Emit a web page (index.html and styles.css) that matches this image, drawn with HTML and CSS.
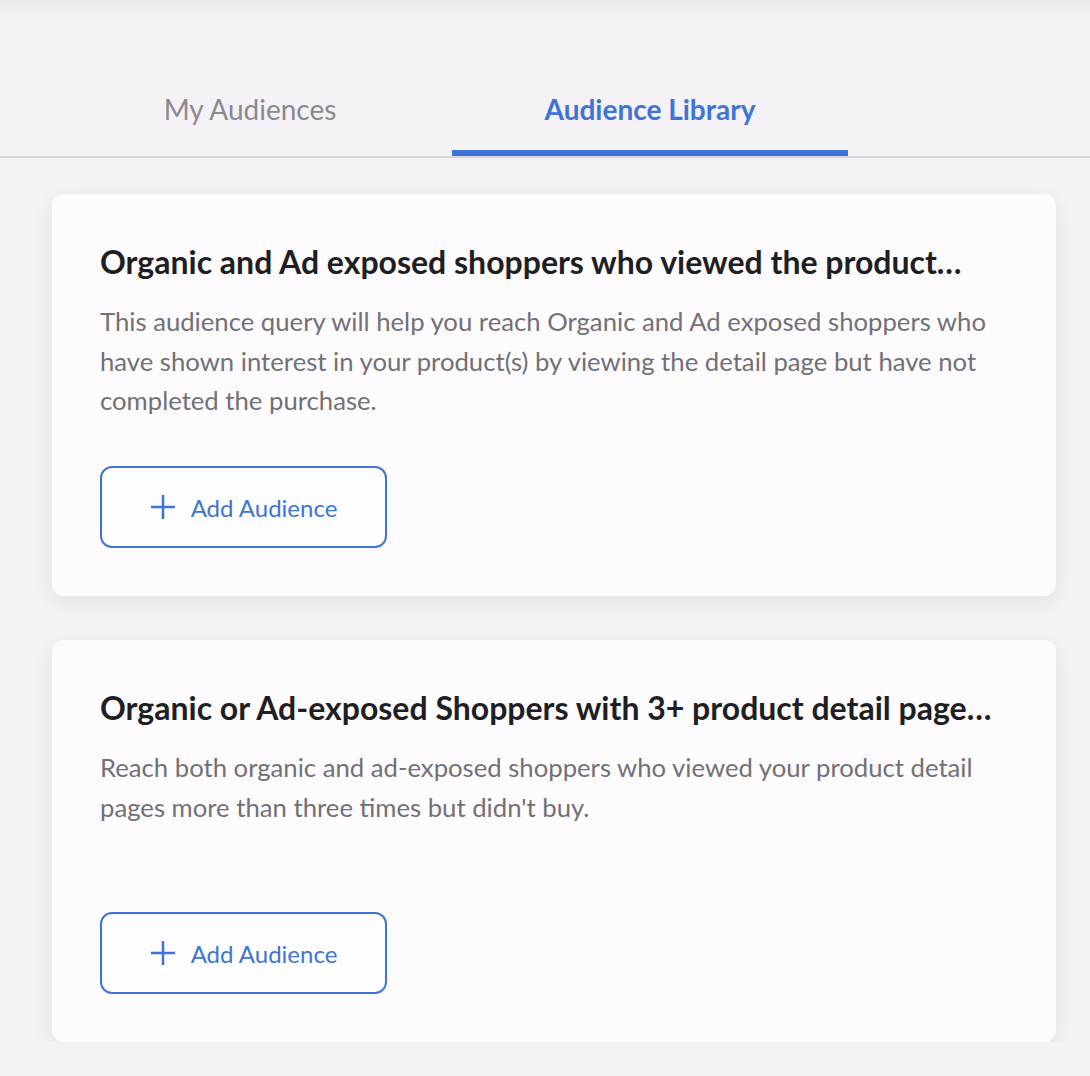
FILE: index.html
```html
<!DOCTYPE html>
<html lang="en">
<head>
    <meta charset="UTF-8">
    <title>Audiences</title>
    <link rel="stylesheet" href="styles.css">
</head>
<body>
    <!-- Tabs -->
    <nav class="tabs">
        <div class="tab">My Audiences</div>
        <div class="tab active">Audience Library</div>
    </nav>

    <!-- Audience library list -->
    <main class="library">
        <section class="card">
            <h2 class="card-title">Organic and Ad exposed shoppers who viewed the product…</h2>
            <p class="card-desc">This audience query will help you reach Organic and Ad exposed shoppers who have shown interest in your product(s) by viewing the detail page but have not completed the purchase.</p>
            <button class="add-btn">
                <svg class="plus" viewBox="0 0 26 26" width="26" height="26"><path d="M13 1v24M1 13h24" stroke="currentColor" stroke-width="2.5" fill="none"/></svg>
                <span>Add Audience</span>
            </button>
        </section>

        <section class="card">
            <h2 class="card-title">Organic or Ad-exposed Shoppers with 3+ product detail page…</h2>
            <p class="card-desc">Reach both organic and ad-exposed shoppers who viewed your product detail pages more than three times but didn't buy.</p>
            <button class="add-btn">
                <svg class="plus" viewBox="0 0 26 26" width="26" height="26"><path d="M13 1v24M1 13h24" stroke="currentColor" stroke-width="2.5" fill="none"/></svg>
                <span>Add Audience</span>
            </button>
        </section>
    </main>
</body>
</html>
```

FILE: styles.css
```css
body {
    margin: 0;
    padding: 0;
    font-family: Lato, "Open Sans", sans-serif;
    background-color: #f4f2f6;
}

.tabs {
    display: flex;
    gap: 4px;
    height: 156px;
    padding-left: 52px;
    border-bottom: 2px solid #d7d5d9;
    background: linear-gradient(#ebe9ed, #f4f2f6 16px);
}

.tab {
    width: 396px;
    display: flex;
    align-items: center;
    justify-content: center;
    box-sizing: border-box;
    height: 156px;
    padding-top: 96px;
    padding-bottom: 28px;
    font-size: 28px;
    color: #8a898d;
    border-bottom: 6px solid transparent;
}

.tab.active {
    color: #3f74d6;
    font-weight: 700;
    border-bottom-color: #3f74d6;
}

.library {
    display: flex;
    flex-direction: column;
    gap: 44px;
    width: 1004px;
    margin: 36px 0 0 52px;
}

.card {
    display: flex;
    flex-direction: column;
    align-items: flex-start;
    box-sizing: border-box;
    height: 402px;
    padding: 48px;
    background-color: #fdfbfe;
    border-radius: 12px;
    box-shadow: 0 6px 22px rgba(40, 30, 60, 0.07);
}

.card-title {
    margin: 0;
    width: 100%;
    font-size: 32px;
    line-height: 40px;
    font-weight: 700;
    color: #1f1e22;
    white-space: nowrap;
    overflow: hidden;
    text-overflow: ellipsis;
}

.card-desc {
    margin: 20px 0 0 0;
    font-size: 25.7px;
    line-height: 39.5px;
    color: #727075;
}

.add-btn {
    margin-top: auto;
    display: flex;
    align-items: center;
    justify-content: center;
    gap: 15px;
    width: 287px;
    height: 82px;
    padding: 0;
    background: #fefdff;
    border: 2px solid #3f74d6;
    border-radius: 12px;
    color: #3f74d6;
    font-family: Lato, "Open Sans", sans-serif;
    font-size: 24px;
    cursor: pointer;
}

.plus {
    display: block;
}
```
